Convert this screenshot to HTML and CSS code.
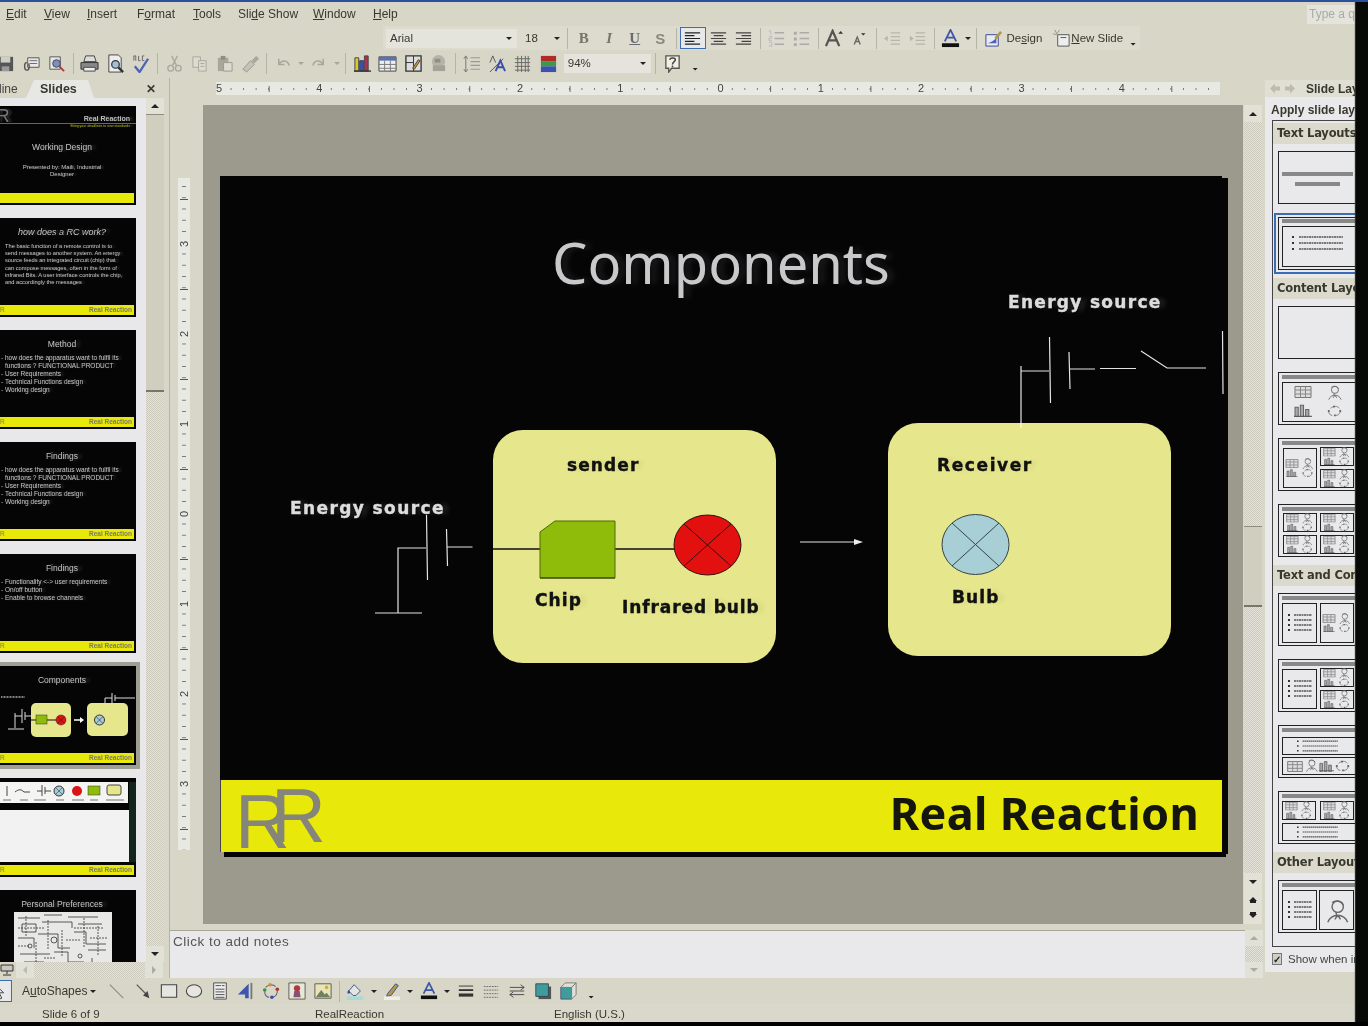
FILE: index.html
```html
<!DOCTYPE html>
<html lang="en">
<head>
    <title>RealReaction - PowerPoint</title>
    <meta charset="UTF-8">
    <link rel="stylesheet" href="styles.css">
</head>

<body>
    <svg class="defs" width="0" height="0">
        <symbol id="i-save" viewBox="0 0 20 20"><path d="M2 3h16v15H2z" fill="#555"/><path d="M5 3h10v6H5z" fill="#cfcfc8"/><path d="M6 13h8v5H6z" fill="#999"/></symbol>
        <symbol id="i-mail" viewBox="0 0 20 20"><path d="M6 4h12v10H6z" fill="#e8e8e4" stroke="#555"/><path d="M8 7h8M8 10h8" stroke="#667"/><path d="M5 9c-3 0-3 8 0 8s3-4 2-7" fill="none" stroke="#555" stroke-width="1.5"/></symbol>
        <symbol id="i-perm" viewBox="0 0 20 20"><path d="M3 3h11v13H3z" fill="#e8e8e4" stroke="#555"/><circle cx="10" cy="10" r="4" fill="#7a8fc0" stroke="#445"/><path d="M13 13l5 5" stroke="#b03a3a" stroke-width="2"/></symbol>
        <symbol id="i-print" viewBox="0 0 20 20"><path d="M6 2h9l2 6H4z" fill="#ddd" stroke="#444"/><path d="M1 9h18v7H1z" fill="#888" stroke="#333"/><path d="M4 14h12v4H4z" fill="#eee" stroke="#444"/></symbol>
        <symbol id="i-prev" viewBox="0 0 20 20"><path d="M3 1h10l3 3v15H3z" fill="#eee" stroke="#444"/><circle cx="10" cy="11" r="4" fill="#9fc0d8" stroke="#333" stroke-width="1.3"/><path d="M13 14l5 5" stroke="#333" stroke-width="2.5"/></symbol>
        <symbol id="i-spell" viewBox="0 0 20 20"><path d="M4 13l5 6 9-14" fill="none" stroke="#4a62b8" stroke-width="2.4"/><path d="M3 7V2h2v5M8 2v5h2M14 2h-2v5h2" fill="none" stroke="#666"/></symbol>
        <symbol id="i-cut" viewBox="0 0 20 20"><g fill="none" stroke="#aaa69c" stroke-width="1.4"><path d="M7 2l5 10M13 2L8 12"/><circle cx="6" cy="15" r="3"/><circle cx="14" cy="15" r="3"/></g></symbol>
        <symbol id="i-copy" viewBox="0 0 20 20"><g fill="#dcdbd0" stroke="#aaa69c"><path d="M3 3h8v11H3z"/><path d="M9 7h8v11H9z"/><path d="M11 10h4M11 13h4"/></g></symbol>
        <symbol id="i-paste" viewBox="0 0 20 20"><path d="M3 4h11v14H3z" fill="#aaa69c"/><path d="M6 2h5v4H6z" fill="#8f8c82"/><path d="M9 9h9v9H9z" fill="#dcdbd0" stroke="#9c998f"/></symbol>
        <symbol id="i-paint" viewBox="0 0 20 20"><path d="M2 16l8-9 4 4-8 8z" fill="#c4c2b6" stroke="#9c998f"/><path d="M11 7l5-5 3 3-5 5z" fill="#aaa69c"/></symbol>
        <symbol id="i-undo" viewBox="0 0 20 20"><path d="M5 5v6h6M5 11c3-5 9-5 11 1" fill="none" stroke="#aaa69c" stroke-width="1.6"/></symbol>
        <symbol id="i-redo" viewBox="0 0 20 20"><path d="M15 5v6H9M15 11c-3-5-9-5-11 1" fill="none" stroke="#aaa69c" stroke-width="1.6"/></symbol>
        <symbol id="i-chart" viewBox="0 0 20 20"><path d="M2 4h4v14H2z" fill="#d8c838" stroke="#444"/><path d="M7 7h4v11H7z" fill="#3a4fb0" stroke="#444"/><path d="M12 2h4v16h-4z" fill="#b03050" stroke="#444"/><path d="M1 18h18" stroke="#333" stroke-width="1.5"/></symbol>
        <symbol id="i-table" viewBox="0 0 20 20"><path d="M1 3h18v15H1z" fill="#eee" stroke="#444"/><path d="M1 3h18v4H1z" fill="#5a72b4"/><path d="M1 11h18M1 15h18M7 7v11M13 7v11" stroke="#777"/></symbol>
        <symbol id="i-frame" viewBox="0 0 20 20"><path d="M2 2h16v16H2z" fill="#ddd" stroke="#333" stroke-width="1.4"/><path d="M10 2v16M2 9h8" stroke="#333"/><path d="M9 15l6-9 2 1-6 9z" fill="#b89a30" stroke="#544"/></symbol>
        <symbol id="i-globe" viewBox="0 0 20 20"><circle cx="10" cy="8" r="7" fill="#b6b4aa"/><path d="M4 12h13v6H4z" fill="#a3a198"/><path d="M6 5h6v4H6z" fill="#8f8d84"/></symbol>
        <symbol id="i-lines" viewBox="0 0 20 20"><path d="M9 4h10M9 8h10M9 12h10M9 16h10" stroke="#999" stroke-width="1.2"/><path d="M4 3v15M2 5l2-3 2 3M2 16l2 3 2-3" fill="none" stroke="#777"/></symbol>
        <symbol id="i-texta" viewBox="0 0 20 20"><path d="M2 9l3-7 3 7" fill="none" stroke="#555"/><path d="M8 18l5-11 5 11M10 14h6" fill="none" stroke="#3a4fa8" stroke-width="2"/><path d="M2 19L16 5" stroke="#3a4fa8"/></symbol>
        <symbol id="i-grid" viewBox="0 0 20 20"><path d="M2 5h16M2 9h16M2 13h16M2 17h16M5 2v17M9 2v17M13 2v17M16 2v17" stroke="#666"/></symbol>
        <symbol id="i-color" viewBox="0 0 20 20"><path d="M2 2h16v6H2z" fill="#b02a2a"/><path d="M2 8h16v5H2z" fill="#3c9a44"/><path d="M2 13h16v6H2z" fill="#3c50b0"/></symbol>
        <symbol id="i-help" viewBox="0 0 20 20"><path d="M3 2h14v13H9l-3 4v-4H3z" fill="#f0f0e0" stroke="#555" stroke-width="1.4"/><path d="M7 6c1-3 6-2 6 0 0 2-3 2-3 5M10 12v2" fill="none" stroke="#444" stroke-width="1.6"/></symbol>
        <symbol id="i-left" viewBox="0 0 20 20"><path d="M2 4h16M2 7h10M2 10h16M2 13h10M2 16h16" stroke="#222" stroke-width="1.3"/></symbol>
        <symbol id="i-center" viewBox="0 0 20 20"><path d="M2 4h16M5 7h10M2 10h16M5 13h10M2 16h16" stroke="#444" stroke-width="1.3"/></symbol>
        <symbol id="i-right" viewBox="0 0 20 20"><path d="M2 4h16M8 7h10M2 10h16M8 13h10M2 16h16" stroke="#444" stroke-width="1.3"/></symbol>
        <symbol id="i-num" viewBox="0 0 20 20"><path d="M8 4h10M8 10h10M8 16h10" stroke="#aaa" stroke-width="1.5"/><path d="M2 2h2v4M2 8h3v2H2v2h3M2 14h3v4H2" fill="none" stroke="#bbb"/></symbol>
        <symbol id="i-bul" viewBox="0 0 20 20"><path d="M8 4h10M8 10h10M8 16h10" stroke="#aaa" stroke-width="1.5"/><path d="M2 3h3v3H2zM2 9h3v3H2zM2 15h3v3H2z" fill="#aaa"/></symbol>
        <symbol id="i-grow" viewBox="0 0 20 20"><path d="M1 18L8 2l7 16M4 12h8" fill="none" stroke="#555" stroke-width="2.4"/><path d="M14 5l2.500-3 2.500 3z" fill="#333"/></symbol>
        <symbol id="i-shrink" viewBox="0 0 20 20"><path d="M3 18l4-10 4 10M4.500 14h5" fill="none" stroke="#666" stroke-width="1.8"/><path d="M12 3h6l-3 3z" fill="#333"/></symbol>
        <symbol id="i-outd" viewBox="0 0 20 20"><path d="M8 4h10M8 8h10M8 12h10M8 16h10" stroke="#b8b6aa" stroke-width="1.4"/><path d="M1 10l4-3v6z" fill="#b8b6aa"/></symbol>
        <symbol id="i-ind" viewBox="0 0 20 20"><path d="M8 4h10M8 8h10M8 12h10M8 16h10" stroke="#b8b6aa" stroke-width="1.4"/><path d="M6 10L2 7v6z" fill="#b8b6aa"/></symbol>
        <symbol id="i-fcolor" viewBox="0 0 20 20"><path d="M4 13l6-12 6 12M6.500 9h7" fill="none" stroke="#3f56a8" stroke-width="1.9"/><path d="M1 15h18v4H1z" fill="#111"/></symbol>
        <symbol id="i-design" viewBox="0 0 20 20"><path d="M2 6h13v12H2z" fill="#e8eaf4" stroke="#3a4a90"/><path d="M4 15c4-1 7-3 9-6v6z" fill="#4a62b8"/><path d="M11 9l6-7 2 2-6 7z" fill="#b09a4a"/></symbol>
        <symbol id="i-newsl" viewBox="0 0 20 20"><path d="M6 6h12v12H6z" fill="#eee" stroke="#555"/><path d="M9 9h6" stroke="#555"/><path d="M3 1l2 4M1 5l4 1M8 1L5 5" stroke="#99967f"/></symbol>
        <symbol id="i-cursor" viewBox="0 0 20 20"><path d="M4 2l10 10H9l3 6-3 1-3-6-2 3z" fill="#eee" stroke="#333"/></symbol>
        <symbol id="i-line" viewBox="0 0 20 20"><path d="M2 3l15 15" stroke="#888" stroke-width="1.2"/></symbol>
        <symbol id="i-arrow" viewBox="0 0 20 20"><path d="M3 3l12 12" stroke="#555" stroke-width="1.3"/><path d="M17 18l-7-3 5-5z" fill="#444"/></symbol>
        <symbol id="i-rect" viewBox="0 0 20 20"><path d="M1.500 3h17v14h-17z" fill="#e6e6e0" stroke="#444" stroke-width="1.2"/></symbol>
        <symbol id="i-oval" viewBox="0 0 20 20"><ellipse cx="10" cy="10" rx="8.500" ry="7" fill="#e6e6e0" stroke="#444" stroke-width="1.2"/></symbol>
        <symbol id="i-tbox" viewBox="0 0 20 20"><path d="M3 1h14v18H3z" fill="#eee" stroke="#444"/><path d="M5 4h6M12 4h3M5 8h10M5 11h10M5 14h10M5 17h10" stroke="#444"/></symbol>
        <symbol id="i-wart" viewBox="0 0 20 20"><path d="M1 14L13 2v16h-4v-4z" fill="#3f56b0"/><path d="M16 1v18" stroke="#777" stroke-width="2"/></symbol>
        <symbol id="i-diag" viewBox="0 0 20 20"><g fill="none" stroke="#667" stroke-width="1.2"><path d="M4 6c2-3 8-4 11-1M17 10c0 3-2 6-5 7M8 17c-3 0-5-3-5-6"/></g><circle cx="9" cy="3" r="2" fill="#d09030"/><circle cx="17" cy="8" r="2" fill="#b03030"/><circle cx="11" cy="17" r="2" fill="#3a4fb0"/><circle cx="3" cy="9" r="2" fill="#3a9040"/></symbol>
        <symbol id="i-clip" viewBox="0 0 20 20"><path d="M1 1h18v18H1z" fill="#e8e8d8" stroke="#555"/><circle cx="10" cy="7" r="3.500" fill="#b03848"/><path d="M6 17l1-7h6l1 7z" fill="#8a5070"/></symbol>
        <symbol id="i-pic" viewBox="0 0 20 20"><path d="M1 2h18v16H1z" fill="#e8e4b8" stroke="#555"/><circle cx="14" cy="6" r="2" fill="#d0b030"/><path d="M2 17l6-8 4 5 2-2 4 5z" fill="#708060"/></symbol>
        <symbol id="i-fill" viewBox="0 0 20 20"><path d="M3 10l6-7 7 7-5 5H8z" fill="#e4e4e0" stroke="#3a4a90"/><path d="M3 9c-2 2-2 4 0 4s2-2 0-4z" fill="#3a4a90"/><path d="M1 16h18v4H1z" fill="#a6dcd8"/></symbol>
        <symbol id="i-pen" viewBox="0 0 20 20"><path d="M5 13L14 2l3 2-8 11-5 1z" fill="#b09a4a" stroke="#3a4a90"/><path d="M1 16h18v4H1z" fill="#efefe8"/></symbol>
        <symbol id="i-lstyle" viewBox="0 0 20 20"><path d="M2 4.500h16" stroke="#333"/><path d="M2 9h16" stroke="#333" stroke-width="2"/><path d="M2 14.500h16" stroke="#333" stroke-width="3.500"/></symbol>
        <symbol id="i-ldash" viewBox="0 0 20 20"><path d="M2 5h16M2 9h16M2 13h16M2 17h16" stroke="#666" stroke-dasharray="2 1"/></symbol>
        <symbol id="i-larr" viewBox="0 0 20 20"><path d="M2 6h16M14 3l4 3-4 3M18 14H2M6 11l-4 3 4 3M2 10h16" fill="none" stroke="#444"/></symbol>
        <symbol id="i-shadow" viewBox="0 0 20 20"><path d="M5 5h14v14H5z" fill="#555"/><path d="M2 2h14v14H2z" fill="#3f9c9c" stroke="#345"/></symbol>
        <symbol id="i-3d" viewBox="0 0 20 20"><path d="M2 6h12v13H2z" fill="#3f9c9c" stroke="#557"/><path d="M2 6l5-5h12l-5 5zM14 6l5-5v13l-5 5z" fill="#dfe0d8" stroke="#777"/></symbol>

        <symbol id="l-table" viewBox="0 0 17 12"><path d="M.5.5h16v11H.5z" fill="#ddd" stroke="#777"/><path d="M.5 4h16M.5 8h16M6 .5v11M11 .5v11" stroke="#888"/></symbol>
        <symbol id="l-person" viewBox="0 0 17 16"><g fill="none" stroke="#666"><circle cx="9" cy="5" r="4"/><path d="M5 2c3-2 7-1 8 2M8 9v2M2 16c1-3 4-5 7-5s6 2 7 5M9 11l-2 3M9 11l2 3"/></g></symbol>
        <symbol id="l-chart" viewBox="0 0 17 12"><path d="M1 3h3v9H1zM6 1h3v11H6zM11 5h3v7h-3z" fill="#aaa" stroke="#666"/><path d="M0 11.500h17" stroke="#555"/></symbol>
        <symbol id="l-dgm" viewBox="0 0 17 12"><path d="M4 3c3-3 8-3 10 0M15 7c-1 3-3 4-5 4M6 11c-2 0-4-2-4-4" fill="none" stroke="#777"/><path d="M7 0h2v2H7zM14 5h2v2h-2zM8 10h2v2H8zM1 5h2v2H1z" fill="#666"/></symbol>
        <symbol id="l-four" viewBox="0 0 33 20">
            <use href="#l-table" x="2" y="1" width="14" height="9"/><use href="#l-person" x="18" y="0" width="13" height="11"/>
            <use href="#l-chart" x="2" y="11" width="14" height="8"/><use href="#l-dgm" x="18" y="11" width="13" height="8"/>
        </symbol>
        <symbol id="l-text" viewBox="0 0 33 20"><path d="M5 3h2M5 8h2M5 13h2M5 18h2" stroke="#333" stroke-width="2"/><path d="M11 3h18M11 8h18M11 13h18M11 18h18" stroke="#555" stroke-width="1.500" stroke-dasharray="2 .5"/></symbol>
        <symbol id="l-wide" viewBox="0 0 70 20"><path d="M10 4h2M10 10h2M10 16h2" stroke="#333" stroke-width="2"/><path d="M17 4h44M17 10h44M17 16h44" stroke="#555" stroke-width="1.500" stroke-dasharray="2 .5"/></symbol>
    </svg>

    <div class="app">
        <div class="menubar">
            <span class="m-edit"><u>E</u>dit</span>
            <span class="m-view"><u>V</u>iew</span>
            <span class="m-insert"><u>I</u>nsert</span>
            <span class="m-format">F<u>o</u>rmat</span>
            <span class="m-tools"><u>T</u>ools</span>
            <span class="m-show">Sli<u>d</u>e Show</span>
            <span class="m-window"><u>W</u>indow</span>
            <span class="m-help"><u>H</u>elp</span>
            <span class="askbox">Type a q</span>
        </div>

        <div class="toolrow fmt-row">
            <div class="combo font-combo"><span>Arial</span><i class="down"></i></div>
            <div class="combo size-combo"><span>18</span><i class="down"></i></div>
            <b class="sep first-sep"></b>
            <span class="tb letter bold">B</span>
            <span class="tb letter ital">I</span>
            <span class="tb letter under">U</span>
            <span class="tb letter shadowed">S</span>
            <b class="sep"></b>
            <span class="tb active"><svg><use href="#i-left"/></svg></span>
            <span class="tb"><svg><use href="#i-center"/></svg></span>
            <span class="tb"><svg><use href="#i-right"/></svg></span>
            <b class="sep"></b>
            <span class="tb"><svg><use href="#i-num"/></svg></span>
            <span class="tb"><svg><use href="#i-bul"/></svg></span>
            <b class="sep"></b>
            <span class="tb"><svg><use href="#i-grow"/></svg></span>
            <span class="tb"><svg class="small"><use href="#i-shrink"/></svg></span>
            <b class="sep"></b>
            <span class="tb"><svg><use href="#i-outd"/></svg></span>
            <span class="tb"><svg><use href="#i-ind"/></svg></span>
            <b class="sep"></b>
            <span class="tb"><svg><use href="#i-fcolor"/></svg></span>
            <i class="down side"></i>
            <b class="sep last-sep"></b>
            <span class="tb"><svg><use href="#i-design"/></svg></span>
            <span class="tb-label design-label">De<u>s</u>ign</span>
            <span class="tb newsl"><svg><use href="#i-newsl"/></svg></span>
            <span class="tb-label new-label"><u>N</u>ew Slide</span>
            <i class="more"></i>
        </div>

        <div class="toolrow std-row">
            <span class="tb"><svg><use href="#i-save"/></svg></span>
            <span class="tb"><svg><use href="#i-mail"/></svg></span>
            <span class="tb"><svg><use href="#i-perm"/></svg></span>
            <b class="sep"></b>
            <span class="tb"><svg><use href="#i-print"/></svg></span>
            <span class="tb"><svg><use href="#i-prev"/></svg></span>
            <span class="tb"><svg><use href="#i-spell"/></svg></span>
            <b class="sep"></b>
            <span class="tb"><svg><use href="#i-cut"/></svg></span>
            <span class="tb"><svg><use href="#i-copy"/></svg></span>
            <span class="tb"><svg><use href="#i-paste"/></svg></span>
            <span class="tb"><svg><use href="#i-paint"/></svg></span>
            <b class="sep"></b>
            <span class="tb"><svg><use href="#i-undo"/></svg></span>
            <i class="down side pale"></i>
            <span class="tb"><svg><use href="#i-redo"/></svg></span>
            <i class="down side pale"></i>
            <b class="sep"></b>
            <span class="tb"><svg><use href="#i-chart"/></svg></span>
            <span class="tb"><svg><use href="#i-table"/></svg></span>
            <span class="tb"><svg><use href="#i-frame"/></svg></span>
            <span class="tb"><svg><use href="#i-globe"/></svg></span>
            <b class="sep"></b>
            <span class="tb"><svg><use href="#i-lines"/></svg></span>
            <span class="tb"><svg><use href="#i-texta"/></svg></span>
            <span class="tb"><svg><use href="#i-grid"/></svg></span>
            <span class="tb"><svg><use href="#i-color"/></svg></span>
            <div class="combo zoom-combo"><span>94%</span><i class="down"></i></div>
            <b class="sep"></b>
            <span class="tb"><svg><use href="#i-help"/></svg></span>
            <i class="more"></i>
        </div>

        <div class="workspace">
            <aside class="leftpane">
                <div class="tabs">
                    <span class="tab-off">line</span>
                    <span class="tab-on">Slides</span>
                    <span class="tab-close">&#10005;</span>
                </div>
                <div class="thumbs-wrap">
                    <div class="thumbs">
                        <div class="thumb first">
                            <span class="t-logo">R</span>
                            <p class="t-brand">Real Reaction</p>
                            <p class="t-tag">Bring your deadlines to new standards</p>
                            <p class="t-title big-gap">Working Design</p>
                            <p class="t-pres">Presented by: Maili, Industrial<br>Designer</p>
                            <div class="t-band"></div>
                        </div>
                        <div class="thumb">
                            <p class="t-title ital">how does a RC work?</p>
                            <p class="t-para">The basic function of a remote control is to<br>send messages to another system. An energy<br>source feeds an integrated circuit (chip) that<br>can compose messages, often in the form of<br>infrared Bits. A user interface controls the chip,<br>and accordingly the messages</p>
                            <div class="t-band"><span>R</span><em>Real Reaction</em></div>
                        </div>
                        <div class="thumb">
                            <p class="t-title">Method</p>
                            <ul class="t-list">
                                <li>how does the apparatus want to fulfil its<br>functions ? FUNCTIONAL PRODUCT</li>
                                <li>User Requirements</li>
                                <li>Technical Functions design</li>
                                <li>Working design</li>
                            </ul>
                            <div class="t-band"><span>R</span><em>Real Reaction</em></div>
                        </div>
                        <div class="thumb">
                            <p class="t-title">Findings</p>
                            <ul class="t-list">
                                <li>how does the apparatus want to fulfil its<br>functions ? FUNCTIONAL PRODUCT</li>
                                <li>User Requirements</li>
                                <li>Technical Functions design</li>
                                <li>Working design</li>
                            </ul>
                            <div class="t-band"><span>R</span><em>Real Reaction</em></div>
                        </div>
                        <div class="thumb">
                            <p class="t-title">Findings</p>
                            <ul class="t-list">
                                <li>Functionality &lt;-&gt; user requirements</li>
                                <li>On/off button</li>
                                <li>Enable to browse channels</li>
                            </ul>
                            <div class="t-band"><span>R</span><em>Real Reaction</em></div>
                        </div>
                        <div class="thumb selected">
                            <p class="t-title">Components</p>
                            <svg class="t-mini" viewBox="0 692 136 60">
                                <path d="M1 697h24M105 691h30" stroke="#aaa" stroke-width="1.5" stroke-dasharray="1 .5"/>
                                <path d="M15 713v15M8 729h16M15 716h7M22 709v14M25 712v8M25 716h7M105 707v-9h7M112 693v10M115 695v6M115 698h20" stroke="#ddd" fill="none"/>
                                <rect x="31" y="703" width="40" height="34" rx="5" fill="#e6e68c"/>
                                <rect x="87" y="703" width="41" height="33" rx="5" fill="#e6e68c"/>
                                <path d="M31 720h30" stroke="#111"/>
                                <rect x="36" y="715" width="11" height="9" fill="#8fbb0a" stroke="#333" stroke-width=".5"/>
                                <circle cx="61" cy="720" r="5" fill="#d81414" stroke="#511" stroke-width=".5"/>
                                <path d="M57.500 716.500l7 7M64.500 716.500l-7 7" stroke="#511" stroke-width=".6"/>
                                <path d="M74 720h8" stroke="#fff" stroke-width="1.500"/><path d="M84 720l-4-3v6z" fill="#fff"/>
                                <circle cx="99.500" cy="720" r="5" fill="#a8cfd6" stroke="#334"/>
                                <path d="M96 716.500l7 7M103 716.500l-7 7" stroke="#334" stroke-width=".7"/>
                            </svg>
                            <div class="t-band"><span>R</span><em>Real Reaction</em></div>
                        </div>
                        <div class="thumb">
                            <svg class="t-sym" viewBox="0 782 136 84">
                                <rect x="0" y="782" width="128" height="21" fill="#f4f4f2"/>
                                <rect x="0" y="810" width="129" height="52" fill="#f2f2f2"/>
                                <rect x="129" y="782" width="7" height="80" fill="#13241a"/>
                                <path d="M7 786v10M15 792c4-3 6-3 9 0h6M37 791h5M42 785v11M45 787v7M45 791h6" stroke="#444" fill="none"/>
                                <circle cx="59" cy="791" r="5" fill="#a8cfd6" stroke="#334"/>
                                <path d="M55.500 787.500l7 7M62.500 787.500l-7 7" stroke="#334" stroke-width=".6"/>
                                <circle cx="77" cy="791" r="5" fill="#d81414"/>
                                <rect x="88" y="786" width="12" height="9" fill="#8fbb0a" stroke="#333" stroke-width=".5"/>
                                <rect x="107" y="785" width="14" height="10" rx="2" fill="#e6e68c" stroke="#444"/>
                                <path d="M3 800h8M20 800h8M34 800h12M56 800h8M72 800h12M90 800h8M106 800h18" stroke="#777" stroke-width="1"/>
                            </svg>
                            <div class="t-band"><span>R</span><em>Real Reaction</em></div>
                        </div>
                        <div class="thumb">
                            <p class="t-title">Personal Preferences</p>
                            <svg class="t-sheet" viewBox="0 0 98 60">
                                <rect width="98" height="60" fill="#e8e8e6"/>
                                <g fill="none" stroke="#333" stroke-width=".8">
                                    <path d="M4 6h22M30 3h18M54 5h30M8 12h14v8H8zM28 10h30v6M64 12h24M4 26h16v10M24 22h20v14h12M60 20h12v12h20M6 42h30M40 40h14v10h16M74 38h18M10 50h20M78 46v10H60M4 56h34"/>
                                    <path d="M12 4v20M34 8v30M48 18v26M70 6v30M84 14v30M22 30v24M4 16h26M52 28h14M30 46h12M60 16h30M4 34h12M76 26h18" stroke-dasharray="2 1"/>
                                    <circle cx="40" cy="28" r="3"/><circle cx="66" cy="44" r="2"/><circle cx="16" cy="34" r="2"/>
                                </g>
                            </svg>
                        </div>
                    </div>
                    <div class="vscroll pane-scroll">
                        <i class="sb-btn"><i class="up"></i></i>
                        <div class="sb-thumb"></div>
                        <div class="sb-track"></div>
                        <i class="sb-btn"><i class="dn"></i></i>
                    </div>
                </div>
                <div class="hscroll">
                    <svg class="slide-view" viewBox="0 0 14 12"><path d="M1 1h12v6H1zM7 7v3M3 11h8" fill="#c8c8bc" stroke="#333"/></svg>
                    <i class="sb-btn"><i class="lf"></i></i>
                    <div class="sb-track"></div>
                    <i class="sb-btn"><i class="rt"></i></i>
                </div>
            </aside>

            <main class="center">
                <div class="hruler-row">
                    <div class="hruler">
                        <span>5</span><span>4</span><span>3</span><span>2</span><span>1</span><span>0</span><span>1</span><span>2</span><span>3</span><span>4</span>
                    </div>
                </div>
                <div class="stage">
                    <div class="vruler-col">
                        <div class="vruler">
                            <span><i>3</i></span><span><i>2</i></span><span><i>1</i></span><span><i>0</i></span><span><i>1</i></span><span><i>2</i></span><span><i>3</i></span>
                        </div>
                    </div>
                    <div class="canvas">
                        <section class="slide">
                            <h1 class="s-title">Components</h1>
                            <svg class="s-diagram" viewBox="220 176 1002 604" width="1002" height="604">
                                <g class="wire">
                                    <path d="M398 613V548h28M375 613h47M447.500 547h25M426.500 515l1 65M446.500 529l1 37"/>
                                    <path d="M800 542h56"/>
                                    <path d="M1021 423v-57M1021 371h28M1049.500 337l1 66M1069 352l1 37M1070 369h25M1100 368.500h36M1141 351l26 17h39M1222.500 331l.5 63"/>
                                </g>
                                <path d="M863 542l-9-3v6z" fill="#eee"/>
                                <rect x="493" y="430" width="283" height="233" rx="30" fill="#e6e68c"/>
                                <rect x="888" y="423" width="283" height="233" rx="30" fill="#e6e68c"/>
                                <path d="M1021 423v5" stroke="#fff"/>
                                <path d="M493 549h47M611 549h64" stroke="#111" stroke-width="1.500"/>
                                <path d="M555 521h60v57h-75v-46z" fill="#8fbb0a" stroke="#4d6a06"/>
                                <path d="M540 578h75" stroke="#2e3a05"/>
                                <g stroke="#311" stroke-width="1">
                                    <ellipse cx="707.500" cy="545" rx="33.500" ry="30" fill="#e31010"/>
                                    <path d="M684 524l47 42M731 524l-47 42"/>
                                </g>
                                <g stroke="#344" stroke-width="1">
                                    <ellipse cx="975.500" cy="544.500" rx="33.500" ry="30" fill="#a8cfd6"/>
                                    <path d="M952 523l47 43M999 523l-47 43"/>
                                </g>
                            </svg>
                            <span class="s-label light e1">Energy source</span>
                            <span class="s-label light e2">Energy source</span>
                            <span class="s-label sender">sender</span>
                            <span class="s-label chip">Chip</span>
                            <span class="s-label infra">Infrared bulb</span>
                            <span class="s-label recv">Receiver</span>
                            <span class="s-label bulb">Bulb</span>
                            <footer class="s-foot">
                                <span class="rr r1">R</span><span class="rr r2">R</span>
                                <strong>Real Reaction</strong>
                            </footer>
                        </section>
                    </div>
                    <div class="vscroll stage-scroll">
                        <i class="sb-btn"><i class="up"></i></i>
                        <div class="sb-track top"></div>
                        <div class="sb-thumb"></div>
                        <div class="sb-track"></div>
                        <i class="sb-btn"><i class="dn"></i></i>
                        <i class="sb-btn"><i class="up dbl"></i></i>
                        <i class="sb-btn"><i class="dn dbl"></i></i>
                    </div>
                </div>
                <div class="notes-row">
                    <div class="notes">Click to add notes</div>
                    <div class="vscroll notes-scroll">
                        <i class="sb-btn"><i class="up pale"></i></i>
                        <div class="sb-track"></div>
                        <i class="sb-btn"><i class="dn pale"></i></i>
                    </div>
                </div>
            </main>

            <aside class="taskpane">
                <div class="task-head">
                    <i class="nav-l"></i><i class="nav-r"></i>
                    <span>Slide Layout</span>
                </div>
                <p class="task-apply">Apply slide layout:</p>
                <div class="layouts">
                    <h3>Text Layouts</h3>
                    <svg class="tile"><path d="M4 21h71v4H4z" fill="#888"/><path d="M17 31h45v4H17z" fill="#888"/><rect x=".5" y=".5" width="90" height="52" fill="none" stroke="#222"/></svg>
                    <svg class="tile sel"><rect x=".5" y=".5" width="90" height="52" fill="none" stroke="#222"/><path d="M4 2h80v4H4z" fill="#888"/><rect x="4.500" y="9.500" width="80" height="40" fill="none" stroke="#222"/><use href="#l-wide" x="4" y="15" width="70" height="22"/></svg>
                    <h3>Content Layouts</h3>
                    <svg class="tile"><rect x=".5" y=".5" width="90" height="52" fill="none" stroke="#222"/></svg>
                    <svg class="tile"><rect x=".5" y=".5" width="90" height="52" fill="none" stroke="#222"/><path d="M4 3h80v4H4z" fill="#888"/><rect x="4.500" y="10.500" width="80" height="39" fill="none" stroke="#222"/><use href="#l-table" x="16" y="14" width="18" height="12"/><use href="#l-person" x="49" y="13" width="15" height="15"/><use href="#l-chart" x="16" y="32" width="18" height="13"/><use href="#l-dgm" x="49" y="33" width="15" height="12"/></svg>
                    <svg class="tile"><rect x=".5" y=".5" width="90" height="52" fill="none" stroke="#222"/><path d="M4 3h80v4H4z" fill="#888"/><rect x="5.500" y="10.500" width="33" height="39" fill="none" stroke="#222"/><use href="#l-four" x="5" y="12" width="33" height="36"/><rect x="42.500" y="9.500" width="33" height="18" fill="none" stroke="#222"/><use href="#l-four" x="42" y="9" width="33" height="19"/><rect x="42.500" y="31.500" width="33" height="18" fill="none" stroke="#222"/><use href="#l-four" x="42" y="31" width="33" height="19"/></svg>
                    <svg class="tile"><rect x=".5" y=".5" width="90" height="52" fill="none" stroke="#222"/><path d="M4 3h80v4H4z" fill="#888"/><rect x="5.500" y="9.500" width="33" height="18" fill="none" stroke="#222"/><use href="#l-four" x="5" y="9" width="33" height="19"/><rect x="42.500" y="9.500" width="33" height="18" fill="none" stroke="#222"/><use href="#l-four" x="42" y="9" width="33" height="19"/><rect x="5.500" y="31.500" width="33" height="18" fill="none" stroke="#222"/><use href="#l-four" x="5" y="31" width="33" height="19"/><rect x="42.500" y="31.500" width="33" height="18" fill="none" stroke="#222"/><use href="#l-four" x="42" y="31" width="33" height="19"/></svg>
                    <h3>Text and Content</h3>
                    <svg class="tile"><rect x=".5" y=".5" width="90" height="52" fill="none" stroke="#222"/><path d="M4 3h80v4H4z" fill="#888"/><rect x="4.500" y="10.500" width="34" height="39" fill="none" stroke="#222"/><use href="#l-text" x="5" y="19" width="33" height="20"/><rect x="42.500" y="10.500" width="33" height="39" fill="none" stroke="#222"/><use href="#l-four" x="42" y="12" width="33" height="36"/></svg>
                    <svg class="tile"><rect x=".5" y=".5" width="90" height="52" fill="none" stroke="#222"/><path d="M4 3h80v4H4z" fill="#888"/><rect x="4.500" y="10.500" width="34" height="39" fill="none" stroke="#222"/><use href="#l-text" x="5" y="19" width="33" height="20"/><rect x="42.500" y="9.500" width="33" height="18" fill="none" stroke="#222"/><use href="#l-four" x="42" y="9" width="33" height="19"/><rect x="42.500" y="31.500" width="33" height="18" fill="none" stroke="#222"/><use href="#l-four" x="42" y="31" width="33" height="19"/></svg>
                    <svg class="tile"><rect x=".5" y=".5" width="90" height="52" fill="none" stroke="#222"/><path d="M4 3h80v4H4z" fill="#888"/><rect x="4.500" y="12.500" width="80" height="17" fill="none" stroke="#222"/><use href="#l-wide" x="4" y="13" width="70" height="16"/><rect x="4.500" y="32.500" width="80" height="17" fill="none" stroke="#222"/><use href="#l-table" x="9" y="36" width="16" height="11"/><use href="#l-person" x="27" y="34" width="13" height="13"/><use href="#l-chart" x="41" y="35" width="15" height="12"/><use href="#l-dgm" x="57" y="35" width="15" height="12"/></svg>
                    <svg class="tile"><rect x=".5" y=".5" width="90" height="52" fill="none" stroke="#222"/><path d="M4 3h80v4H4z" fill="#888"/><rect x="4.500" y="10.500" width="33" height="18" fill="none" stroke="#222"/><use href="#l-four" x="4" y="10" width="33" height="19"/><rect x="42.500" y="10.500" width="33" height="18" fill="none" stroke="#222"/><use href="#l-four" x="42" y="10" width="33" height="19"/><rect x="4.500" y="32.500" width="80" height="17" fill="none" stroke="#222"/><use href="#l-wide" x="4" y="33" width="70" height="16"/></svg>
                    <h3>Other Layouts</h3>
                    <svg class="tile"><rect x=".5" y=".5" width="90" height="52" fill="none" stroke="#222"/><path d="M4 3h80v4H4z" fill="#888"/><rect x="4.500" y="10.500" width="34" height="39" fill="none" stroke="#222"/><use href="#l-text" x="5" y="19" width="33" height="20"/><rect x="41.500" y="10.500" width="34" height="39" fill="none" stroke="#222"/><use href="#l-person" x="47" y="19" width="24" height="24"/></svg>
                    <svg class="tile"><rect x=".5" y=".5" width="90" height="52" fill="none" stroke="#222"/></svg>
                </div>
                <label class="task-show"><i class="check">&#10003;</i>Show when inserting</label>
            </aside>
            <div class="blackstrip"></div>
        </div>

        <div class="drawbar">
            <span class="tb select"><svg><use href="#i-cursor"/></svg></span>
            <span class="autoshapes">A<u>u</u>toShapes</span><i class="down side"></i>
            <span class="tb first-draw"><svg><use href="#i-line"/></svg></span>
            <span class="tb"><svg><use href="#i-arrow"/></svg></span>
            <span class="tb"><svg><use href="#i-rect"/></svg></span>
            <span class="tb"><svg><use href="#i-oval"/></svg></span>
            <span class="tb"><svg><use href="#i-tbox"/></svg></span>
            <span class="tb"><svg><use href="#i-wart"/></svg></span>
            <span class="tb"><svg><use href="#i-diag"/></svg></span>
            <span class="tb"><svg><use href="#i-clip"/></svg></span>
            <span class="tb"><svg><use href="#i-pic"/></svg></span>
            <b class="sep"></b>
            <span class="tb"><svg><use href="#i-fill"/></svg></span><i class="down side"></i>
            <span class="tb"><svg><use href="#i-pen"/></svg></span><i class="down side"></i>
            <span class="tb"><svg><use href="#i-fcolor"/></svg></span><i class="down side"></i>
            <span class="tb"><svg><use href="#i-lstyle"/></svg></span>
            <span class="tb"><svg><use href="#i-ldash"/></svg></span>
            <span class="tb"><svg><use href="#i-larr"/></svg></span>
            <span class="tb"><svg><use href="#i-shadow"/></svg></span>
            <span class="tb"><svg><use href="#i-3d"/></svg></span>
            <i class="more"></i>
        </div>

        <div class="statusbar">
            <span class="st-slide">Slide 6 of 9</span>
            <span class="st-design">RealReaction</span>
            <span class="st-lang">English (U.S.)</span>
        </div>
    </div>
</body>
</html>
```

FILE: styles.css
```css
html, body {
    margin: 0;
    height: 100%;
    overflow: hidden;
    background-color: #000;
}

p, h1, h3, ul {
    margin: 0;
    padding: 0;
}

.defs {
    position: absolute;
}

.app {
    box-sizing: border-box;
    width: 1368px;
    height: 1026px;
    overflow: hidden;
    border-top: 2px solid #2c4f9e;
    border-bottom: 4px solid #000;
    background-color: #d7d6c7;
    color: #38382f;
    font-family: "Liberation Sans", Arial, sans-serif;
    font-size: 12px;
    filter: blur(.45px);
}

/* menu */
.menubar {
    display: flex;
    align-items: center;
    height: 24px;
    padding-left: 6px;
}

.m-edit { width: 38px; }
.m-view { width: 43px; }
.m-insert { width: 50px; }
.m-format { width: 56px; }
.m-tools { width: 45px; }
.m-show { width: 75px; }
.m-window { width: 60px; }
.m-help { width: 934px; }

.askbox {
    box-sizing: border-box;
    width: 60px;
    height: 19px;
    padding: 2px;
    background-color: #e4e4dc;
    color: #aaa;
}

/* toolbars */
.toolrow, .drawbar {
    display: flex;
    align-items: center;
}

.fmt-row {
    width: 757px;
    height: 24px;
    margin-left: 383px;
    padding-left: 3px;
    box-sizing: border-box;
    background-color: #dcdbce;
}

.std-row {
    height: 26px;
    margin-bottom: 2px;
    margin-left: -7px;
}

.tb {
    display: flex;
    flex: none;
    align-items: center;
    justify-content: center;
    box-sizing: border-box;
    width: 25.500px;
    height: 22px;
}

.tb svg {
    width: 19px;
    height: 19px;
}

.tb svg.small {
    width: 15px;
    height: 15px;
}

.tb.active {
    border: 1px solid #3c6cb4;
    background-color: #e6e8ea;
}

.letter {
    color: #77766c;
    font-family: "Liberation Serif", serif;
    font-size: 15px;
    font-weight: bold;
}

.ital { font-style: italic; }
.under { text-decoration: underline; color: #6a6a72; }
.shadowed { font-family: "Liberation Sans", sans-serif; color: #8a897f; }

.sep {
    flex: none;
    width: 1px;
    height: 21px;
    margin: 0 3px;
    background-color: #b5b4a6;
}

.sep.first-sep {
    margin: 0 3px 0 2px;
}

.sep.last-sep {
    margin: 0 4px 0 3px;
}

.std-row .tb {
    width: 25.400px;
}

.std-row .sep {
    margin: 0 3.500px;
}

.combo {
    display: flex;
    flex: none;
    align-items: center;
    justify-content: space-between;
    box-sizing: border-box;
    height: 19px;
    padding: 0 3px 0 4px;
    background-color: #e4e4dc;
    font-size: 11.500px;
}

.font-combo { width: 131px; }
.size-combo { width: 44px; margin-left: 4px; background-color: #dcdbce; }
.zoom-combo { width: 87px; margin: 0 1px 0 3px; background-color: #e4e4dc; }

.down {
    display: inline-block;
    flex: none;
    width: 0;
    height: 0;
    margin: 0 2px;
    border-top: 3px solid #222;
    border-right: 3px solid transparent;
    border-left: 3px solid transparent;
}

.down.side {
    margin: 0 2px;
}

.down.pale {
    border-top-color: #aaa69c;
}

.more {
    flex: none;
    width: 6px;
    height: 3px;
    margin: 12px 0 0 7px;
    background-color: #222;
    clip-path: polygon(0 0, 100% 0, 50% 100%);
}

.tb-label {
    flex: none;
    font-size: 11.500px;
    white-space: nowrap;
}

.design-label { margin-left: 0; }
.newsl { width: 26px; margin-left: 6px; }
.new-label { margin-left: -3px; }

/* workspace */
.workspace {
    position: relative;
    display: flex;
    height: 900px;
}

.blackstrip {
    position: absolute;
    top: -78px;
    right: 0;
    bottom: -48px;
    width: 12px;
    background-color: #070907;
    box-shadow: -1px 0 1px #26301f;
}

/* thumbnails */
.leftpane {
    flex: none;
    box-sizing: border-box;
    width: 170px;
    padding-right: 6px;
    border-right: 1px solid #b5b4a6;
}

.tabs {
    display: flex;
    align-items: center;
    height: 20px;
    padding-top: 2px;
    box-sizing: border-box;
    font-size: 12px;
}

.tab-off {
    width: 27px;
    margin-left: -1px;
    color: #444;
}

.tab-on {
    width: 68px;
    padding-left: 14px;
    box-sizing: border-box;
    font-size: 12.500px;
    font-weight: bold;
    height: 18px;
    line-height: 18px;
    background-color: #e7e7e4;
    clip-path: polygon(8px 0, 62px 0, 68px 100%, 0 100%);
}

.tab-close {
    margin-left: 52px;
    font-size: 12px;
    font-weight: bold;
}

.thumbs-wrap {
    display: flex;
    height: 864px;
    background-color: #e8e8ea;
}

.thumbs {
    flex: none;
    width: 146px;
    height: 864px;
    padding-top: 8px;
    box-sizing: border-box;
    overflow: hidden;
}

.thumb {
    position: relative;
    box-sizing: border-box;
    width: 148px;
    height: 99px;
    margin: 0 0 13px -12px;
    overflow: hidden;
    background-color: #050505;
    color: #c8c8c8;
    font-size: 6.500px;
    line-height: 8px;
    text-shadow: 3px 0 2px rgba(255, 255, 255, .18);
}

.t-title {
    padding-top: 9px;
    color: #c4c4c4;
    font-size: 8.500px;
    line-height: 10px;
    text-align: center;
    text-shadow: 4px 0 3px rgba(255, 255, 255, .2);
}

.t-title.ital { font-style: italic; font-size: 9px; }
.t-title.big-gap { padding-top: 13px; }

.t-logo {
    position: absolute;
    top: 0;
    left: 8px;
    color: #777;
    font-size: 19px;
    line-height: 19px;
    font-weight: 400;
}

.t-brand {
    padding: 9px 6px 0 0;
    border-bottom: 1px solid #666;
    color: #bbb;
    font-size: 7px;
    font-weight: bold;
    line-height: 8px;
    text-align: right;
}

.t-tag {
    padding-right: 6px;
    color: #b8b810;
    font-size: 3.500px;
    line-height: 5px;
    text-align: right;
}

.t-pres {
    padding-top: 12px;
    font-size: 6px;
    line-height: 7px;
    text-align: center;
}

.t-para {
    padding: 6px 0 0 17px;
    font-size: 5.700px;
    line-height: 7.200px;
    white-space: nowrap;
}

.t-list {
    padding: 5px 0 0 17px;
    list-style: none;
    white-space: nowrap;
}

.t-list li::before {
    content: "-";
    position: absolute;
    left: 13px;
}

.t-band {
    position: absolute;
    right: 2px;
    bottom: 2px;
    left: 0;
    display: flex;
    align-items: center;
    justify-content: space-between;
    height: 10px;
    padding: 0 2px 0 12px;
    background-color: #e8e80a;
    color: #777;
    font-size: 6.500px;
    text-shadow: none;
}

.t-band em {
    font-style: normal;
    font-weight: bold;
}

.t-mini {
    display: block;
    width: 136px;
    height: 60px;
    margin: 7px 0 0 12px;
}

.t-sym {
    display: block;
    width: 136px;
    height: 84px;
    margin: 4px 0 0 12px;
}

.t-sheet {
    display: block;
    width: 98px;
    height: 60px;
    margin: 3px 0 0 26px;
}

.selected {
    overflow: visible;
    outline: 4px solid #a09f94;
}

/* scrollbars */
.vscroll {
    display: flex;
    flex: none;
    flex-direction: column;
    width: 18px;
}

.sb-btn {
    display: flex;
    flex: none;
    align-items: center;
    justify-content: center;
    width: 18px;
    height: 16px;
    background-color: #e2e1d6;
}

.sb-track {
    flex: 1;
    background-color: #d2d1c3;
    background-image: repeating-conic-gradient(#e4e3da 0 25%, #cbcabc 0 50%);
    background-size: 2px 2px;
}

.sb-thumb {
    flex: none;
    background-color: #cfcebf;
    border-top: 1px solid #8e8d80;
    border-bottom: 2px solid #77766a;
}

.pane-scroll .sb-thumb { height: 275px; }
.stage-scroll .sb-thumb { height: 78px; }
.stage-scroll .sb-track.top { flex: none; height: 404px; }
.stage-scroll .sb-btn { height: 17px; }

.up, .dn, .lf, .rt {
    display: block;
    width: 0;
    height: 0;
    border: 4px solid transparent;
}

.up { border-top: 0; border-bottom-color: #222; }
.dn { border-bottom: 0; border-top-color: #222; }
.lf { border-left: 0; border-right-color: #bbb; }
.rt { border-right: 0; border-left-color: #aaa; }
.up.pale { border-bottom-color: #aaa; }
.dn.pale { border-top-color: #aaa; }

.up.dbl { box-shadow: 0 3px 0 -1px #222; }
.dn.dbl { box-shadow: 0 -3px 0 -1px #222; }

.hscroll {
    display: flex;
    align-items: center;
    height: 16px;
}

.slide-view {
    flex: none;
    width: 14px;
    height: 12px;
    margin-right: 2px;
}

.hscroll .sb-track {
    height: 16px;
}

/* centre */
.center {
    flex: none;
    width: 1095px;
}

.hruler-row {
    height: 27px;
    padding: 4px 0 0 46px;
    box-sizing: border-box;
}

.hruler {
    display: flex;
    box-sizing: border-box;
    width: 1004px;
    height: 13px;
    background-color: #e9e9e4;
    background-image:
        repeating-linear-gradient(90deg, transparent 0 49.500px, #666 49.500px 50.500px, transparent 50.500px 100.300px),
        repeating-linear-gradient(90deg, transparent 0 12px, #777 12px 13px, transparent 13px 12.540px);
    background-position: 3px 3.500px, 3px 5.500px;
    background-size: 100.300px 6px, 12.540px 2px;
    background-repeat: repeat-x;
    font-size: 11px;
    line-height: 13px;
    color: #444;
}

.hruler span {
    flex: none;
    width: 100.300px;
    background: linear-gradient(#e9e9e4, #e9e9e4) no-repeat 0 0 / 8px 100%;
}

.stage {
    display: flex;
    height: 819px;
    margin-bottom: 6px;
}

.vruler-col {
    flex: none;
    width: 33px;
    padding: 73px 0 0 8px;
    box-sizing: border-box;
}

.vruler {
    display: flex;
    flex-direction: column;
    box-sizing: border-box;
    width: 12px;
    height: 672px;
    padding-top: 21px;
    background-color: #e9e9e4;
    background-image:
        repeating-linear-gradient(180deg, transparent 0 21px, #555 21px 22px, transparent 22px 90px),
        repeating-linear-gradient(180deg, #777 0 1px, transparent 1px 11.250px);
    background-position: 2px 0, 4px 8px;
    background-size: 8px 90px, 4px 11.250px;
    background-repeat: repeat-y;
    font-size: 11px;
    line-height: 12px;
    color: #444;
}

.vruler span {
    display: block;
    flex: none;
    width: 12px;
    height: 90px;
    padding-top: 39px;
    box-sizing: border-box;
    text-align: center;
    background: linear-gradient(#e9e9e4, #e9e9e4) no-repeat 0 38px / 100% 14px;
}

.vruler i {
    display: block;
    font-style: normal;
    transform: rotate(-90deg);
}

.canvas {
    flex: none;
    box-sizing: border-box;
    width: 1040px;
    padding: 71px 0 0 17px;
    background-color: #9b9a8c;
}

.stage-scroll {
    margin-left: 1px;
}

.notes-row {
    display: flex;
    height: 48px;
}

.notes {
    flex: none;
    box-sizing: border-box;
    width: 1075px;
    padding: 3px;
    background-color: #e9e9eb;
    border-top: 1px solid #a8a79a;
    font-size: 13.500px;
    letter-spacing: .5px;
    color: #555;
}

/* slide */
.slide {
    position: relative;
    width: 1002px;
    height: 676px;
    background-color: #050505;
    box-shadow: 6px 2px 0 #050505, 4px 5px 0 #050505;
}

.s-title {
    position: absolute;
    top: 50px;
    left: 0;
    width: 100%;
    color: #c9c9cc;
    font-family: "Noto Sans", sans-serif;
    font-size: 56px;
    font-weight: 400;
    line-height: 72px;
    text-align: center;
    text-shadow: 6px 0 6px rgba(255, 255, 255, .1);
}

.s-diagram {
    position: absolute;
    top: 0;
    left: 0;
    overflow: visible;
}

.wire {
    fill: none;
    stroke: #e4e4e4;
    stroke-width: 1.200;
}

.s-label {
    position: absolute;
    color: #111;
    font-family: "DejaVu Sans", sans-serif;
    font-size: 17px;
    font-weight: bold;
    letter-spacing: 1.100px;
    line-height: 20px;
    white-space: nowrap;
    -webkit-text-stroke: .4px currentColor;
    text-shadow: 6px 0 4px rgba(20, 20, 0, .06);
}

.s-label.light {
    color: #ddddde;
    text-shadow: 6px 0 4px rgba(255, 255, 255, .12);
}

.e1 { top: 322px; left: 70px; letter-spacing: 1.400px; }
.e2 { top: 116px; left: 788px; letter-spacing: 1.300px; }
.sender { top: 279px; left: 347px; }
.chip { top: 414px; left: 315px; }
.infra { top: 421px; left: 402px; letter-spacing: .9px; }
.recv { top: 279px; left: 717px; letter-spacing: 1.600px; }
.bulb { top: 411px; left: 732px; }

.s-foot {
    position: absolute;
    right: 0;
    bottom: 0;
    left: 0;
    display: flex;
    align-items: center;
    justify-content: flex-end;
    height: 72px;
    padding: 0 23px 8px 0;
    background-color: #e8e80a;
    border-left: 1px solid #444;
    box-sizing: border-box;
    color: #151510;
    font-family: "Noto Sans", sans-serif;
    font-size: 45px;
    letter-spacing: .3px;
}

.rr {
    position: absolute;
    color: #85857a;
    font-family: "Liberation Sans", sans-serif;
    font-size: 76px;
    font-weight: 400;
    line-height: 76px;
    letter-spacing: 0;
}

.r1 { top: 4px; left: 14px; }
.r2 { top: -2px; left: 50px; }

/* task pane */
.taskpane {
    flex: none;
    box-sizing: border-box;
    width: 91px;
    height: 892px;
    margin-top: 2px;
    overflow: hidden;
    background-color: #e9e9eb;
}

.task-head {
    display: flex;
    align-items: center;
    height: 17px;
    background-color: #dfdfd4;
    font-size: 12px;
    font-weight: bold;
    white-space: nowrap;
}

.nav-l, .nav-r {
    flex: none;
    width: 10px;
    height: 10px;
    margin-left: 5px;
    background-color: #bcbbae;
}

.nav-l { clip-path: polygon(0 50%, 50% 0, 50% 30%, 100% 30%, 100% 70%, 50% 70%, 50% 100%); }
.nav-r { clip-path: polygon(100% 50%, 50% 0, 50% 30%, 0 30%, 0 70%, 50% 70%, 50% 100%); }

.task-head span {
    margin-left: 11px;
}

.task-apply {
    height: 23px;
    padding: 6px 0 0 6px;
    box-sizing: border-box;
    font-size: 12px;
    font-weight: bold;
    white-space: nowrap;
}

.layouts {
    box-sizing: border-box;
    height: 827px;
    margin-left: 7px;
    width: 100px;
    padding: 2px 0 0 5px;
    overflow: hidden;
    border-top: 1px solid #444;
    border-bottom: 1px solid #444;
    border-left: 1px solid #444;
}

.layouts h3 {
    height: 21px;
    margin: -5px 0 7px -5px;
    padding: 3px 0 0 4px;
    box-sizing: border-box;
    background-color: #dbdacc;
    font-size: 11.500px;
    font-family: "DejaVu Sans", sans-serif;
    letter-spacing: -.2px;
    white-space: nowrap;
}

.layouts h3:first-child {
    margin-top: 0;
}

.tile {
    display: block;
    width: 91px;
    height: 53px;
    margin-bottom: 13px;
}

.tile.sel {
    outline: 2px solid #3c6cb4;
    outline-offset: 2px;
}

.task-show {
    display: flex;
    align-items: center;
    height: 24px;
    padding-left: 7px;
    font-size: 11.500px;
    white-space: nowrap;
    color: #444;
}

.check {
    display: flex;
    align-items: center;
    justify-content: center;
    box-sizing: border-box;
    width: 12px;
    height: 12px;
    margin-right: 6px;
    border: 1px solid #777;
    background-color: #d0cfc4;
    font-size: 10px;
    font-style: normal;
    font-weight: bold;
    color: #222;
}

/* drawing toolbar and status */
.drawbar {
    height: 26px;
    margin-left: -13px;
}

.drawbar .tb {
    width: 25.700px;
}

.drawbar .tb svg {
    width: 18px;
    height: 18px;
}

.drawbar .tb.select {
    width: 25px;
    margin-right: 10px;
    border: 1px solid #3c6cb4;
    background-color: #e6e8ea;
}

.autoshapes {
    font-size: 12px;
}

.first-draw { margin-left: 6px; }

.drawbar .sep {
    margin: 0 3px;
}

.drawbar .down.side {
    margin: 0 2.500px;
}

.statusbar {
    height: 18px;
    display: flex;
    align-items: center;
    padding-top: 1px;
    box-sizing: border-box;
    background-color: #d9d8ca;
    font-size: 11.500px;
}

.st-slide { padding-left: 42px; width: 315px; box-sizing: border-box; }
.st-design { width: 239px; }
```
